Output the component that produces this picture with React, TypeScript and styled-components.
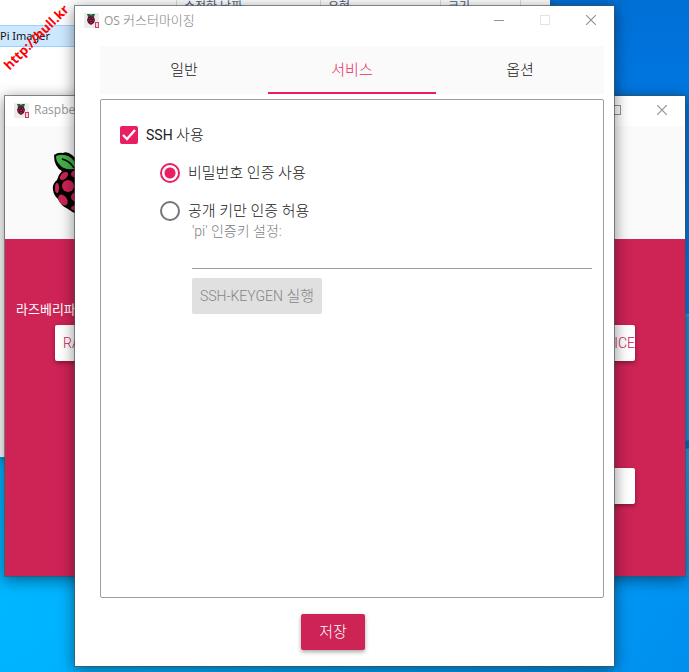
import React, { useState } from "react";
import styled, { createGlobalStyle } from "styled-components";

const GlobalStyle = createGlobalStyle`
  *, *::before, *::after { box-sizing: border-box; }
  body {
    margin: 0;
    font-family: Roboto, "Noto Sans CJK KR", sans-serif;
    font-size: 14px;
    line-height: 20px;
    color: #303030;
  }
  button, input { font: inherit; margin: 0; }
`;

const Desktop = styled.div`
  position: relative;
  min-height: 100vh;
  overflow: hidden;
  background:
    linear-gradient(
      to bottom,
      transparent 314px,
      #35a9e8 314px,
      #1f91e0 318px,
      #1f91e0 440px,
      #006fc8 441px,
      #006fc8 448px,
      #2b9be6 449px,
      #1f91e0 576px,
      transparent 576px
    ) right top / 8px 100% no-repeat,
    radial-gradient(circle at 0% 90%, #00b6ff 0%, #00aefc 20%, rgba(0, 150, 246, 0) 80%),
    linear-gradient(to bottom, #006fd6 0%, #007ae4 20%, #0090f2 85%, #008cec 100%);
`;

const Explorer = styled.section`
  position: absolute;
  inset: 0 139px 215px 0;
  background: #fff;
  box-shadow: 0 3px 10px rgba(0, 0, 0, 0.35);
`;

const ColumnHeader = styled.div`
  display: grid;
  grid-template-columns: 177px 144px 120px 80px 1fr;
  height: 14px;
  color: #4c607a;
  font-size: 12px;
  line-height: 14px;
`;

const ColumnName = styled.span`
  padding-left: 7px;
  border-right: 1px solid #dcdcdc;
  white-space: nowrap;
  &:last-child { border-right: 0; }
`;

const FileRow = styled.div`
  height: 22px;
  margin-top: 11px;
  background: #cce8ff;
  border: 1px solid #99d1ff;
  border-width: 1px 0;
  color: #111;
  font-family: "Noto Sans", sans-serif;
  font-size: 11px;
  line-height: 20px;
`;

const Watermark = styled.span`
  position: absolute;
  left: 36px;
  top: 37px;
  color: #f00;
  font: bold 13px/16px "Open Sans", sans-serif;
  transform: translate(-50%, -50%) rotate(-45deg);
  white-space: nowrap;
`;

const AppWindow = styled.section<{ $inset: string }>`
  position: absolute;
  inset: ${(p) => p.$inset};
  display: flex;
  flex-direction: column;
  background: #fff;
  border: 1px solid rgba(70, 80, 85, 0.62);
  background-clip: padding-box;
  box-shadow: 0 3px 14px rgba(0, 0, 0, 0.45);
`;

const TitleBar = styled.header`
  display: flex;
  align-items: center;
  height: 30px;
  padding: 0 0 2px 9px;
  flex: none;
`;

const Title = styled.h1`
  flex: 1;
  margin: 0 0 0 5px;
  color: #959595;
  font-family: "Open Sans", "Noto Sans CJK KR", sans-serif;
  font-size: 12px;
  font-weight: 400;
  line-height: 20px;
  white-space: nowrap;
`;

const TitleKo = styled.span`
  font-size: 13px;
  font-weight: 300;
  color: #808080;
`;

const Ko = styled.span`
  font-size: 15px;
  font-weight: 300;
`;

const CaptionButton = styled.button`
  display: grid;
  place-items: center;
  width: 46px;
  height: 28px;
  padding: 0;
  border: 0;
  background: transparent;
  color: #929292;
  &:disabled { color: #e4e4e4; }
`;

const SmallIcon = styled.svg`
  display: block;
  width: 15px;
  height: 15px;
  flex: none;
`;

const BrandHeader = styled.div`
  display: flex;
  align-items: center;
  height: 113px;
  padding-left: 47px;
  background: #fafafa;
`;

const BrandArea = styled.div`
  flex: 1;
  padding: 61px 50px 0 11px;
  background: #cd2355;
`;

const Choices = styled.div`
  display: flex;
  justify-content: space-between;
`;

const Choice = styled.div`
  display: flex;
  flex-direction: column;
  gap: 5px;
  color: #fff;
`;

const ChoiceLabel = styled.span`
  height: 20px;
  font-size: 13px;
`;

const WhiteButton = styled.button<{ $end?: boolean }>`
  width: 120px;
  height: 36px;
  margin-left: ${(p) => (p.$end ? "0" : "39px")};
  padding: 0 0 0 8px;
  text-align: ${(p) => (p.$end ? "right" : "left")};
  border: 0;
  border-radius: 2px;
  background: #fff;
  color: #cd2355;
  font-weight: 300;
  box-shadow: 0 2px 4px rgba(0, 0, 0, 0.35);
`;

const NextRow = styled.div`
  display: flex;
  justify-content: flex-end;
  margin-top: 107px;
`;

const DialogBody = styled.div`
  display: flex;
  flex: 1;
  flex-direction: column;
  padding: 10px 10px 16px 25px;
`;

const Tabs = styled.div`
  display: grid;
  grid-template-columns: repeat(3, 1fr);
  background: #fafafa;
`;

const Tab = styled.button<{ $active: boolean }>`
  height: 48px;
  padding: 2px 0 0;
  border: 0;
  border-bottom: 2px solid ${(p) => (p.$active ? "#e91e63" : "transparent")};
  background: transparent;
  color: ${(p) => (p.$active ? "#e91e63" : "#202020")};
`;

const Panel = styled.div`
  flex: 1;
  margin-top: 5px;
  padding: 25px 11px 24px 19px;
  border: 1px solid #9e9e9e;
  border-radius: 2px;
`;

const OptionRow = styled.label`
  display: flex;
  align-items: center;
  gap: 8px;
  height: 20px;
  color: #202020;
`;

const RadioGroup = styled.div`
  display: grid;
  gap: 18px;
  margin: 18px 0 0 40px;
`;

const TickSlot = styled.span`
  display: grid;
  color: #fff;
  & > * { grid-area: 1 / 1; }
  & > svg { pointer-events: none; }
  & > input:not(:checked) + svg { visibility: hidden; }
`;

const TickBox = styled.input`
  appearance: none;
  width: 18px;
  height: 18px;
  border: 2px solid #757575;
  border-radius: 2px;
  &:checked { border-color: #e91e63; background: #e91e63; }
`;

const Radio = styled.input`
  appearance: none;
  width: 20px;
  height: 20px;
  border: 2px solid #757575;
  border-radius: 50%;
  &:checked {
    border-color: #e91e63;
    background: radial-gradient(circle, #e91e63 5px, transparent 6px);
  }
`;

const KeyField = styled.div`
  display: flex;
  flex-direction: column;
  align-items: flex-start;
  margin: 2px 0 0 72px;
`;

const KeyLabel = styled.label`
  color: #808080;
  font-size: 14px;
  font-weight: 300;
  line-height: 16px;
`;

const KeyInput = styled.input`
  width: 100%;
  height: 30px;
  padding: 0;
  border: 0;
  border-bottom: 1px solid #9e9e9e;
  background: transparent;
  outline: 0;
`;

const KeygenButton = styled.button`
  height: 36px;
  margin-top: 9px;
  padding: 0 8px;
  border: 0;
  border-radius: 2px;
  background: #e0e0e0;
  color: #858585;
  font-weight: 300;
  white-space: nowrap;
`;

const Footer = styled.footer`
  display: flex;
  justify-content: center;
  padding: 16px 38px 0 0;
`;

const SaveButton = styled.button`
  width: 64px;
  height: 36px;
  padding: 0;
  border: 0;
  border-radius: 2px;
  background: #cd2355;
  color: #fff;
  box-shadow: 0 2px 4px rgba(0, 0, 0, 0.35);
`;

function RaspberryIcon() {
  return (
    <SmallIcon viewBox="0 0 15 15" aria-hidden="true">
      <rect width="15" height="15" rx="1" fill="#ececea" />
      <path d="M3 1h3l1 1 1-1h3l-1 3H4z" fill="#27633a" />
      <path d="M4 4l3-1 3 1 1 3-1 3-3 2-3-2-1-3z" fill="#5b1730" />
      <path d="M5 5h1v1H5zM8 5h1v1H8zM6 7h2v1H6zM4 7h1v1H4zM9 7h1v1H9zM6 9h2v1H6z" fill="#b51e4b" />
      <rect x="11.5" y="9.5" width="3" height="5" fill="#f7d5de" stroke="#d33b62" />
    </SmallIcon>
  );
}

function RaspberryLogo() {
  return (
    <svg width="50" height="62" viewBox="0 0 50 62" aria-hidden="true">
      <path
        d="M2 3Q6 0 11 1Q15-1 20 3Q23 5 25 9Q27 5 30 3Q35-1 39 1Q44 0 48 3Q48 15 40 19Q44 23 45 28Q50 32 49 38Q48 44 44 47Q41 54 34 57Q29 61 25 62Q21 61 16 57Q9 54 6 47Q2 44 1 38Q0 32 5 28Q6 23 10 19Q2 15 2 3Z"
        fill="#000"
      />
      <path d="M4 4Q15 0 22 9Q24 13 22 17Q11 18 8 13Q4 10 4 4Z" fill="#46af4b" />
      <path d="M46 4Q35 0 28 9Q26 13 28 17Q39 18 42 13Q46 10 46 4Z" fill="#46af4b" />
      <path d="M10 7Q18 9 22 16M40 7Q32 9 28 16" fill="none" stroke="#000" strokeWidth="1.5" />
      <g fill="#cd2355">
        <ellipse cx="12" cy="24" rx="3" ry="5" transform="rotate(48 12 24)" />
        <ellipse cx="38" cy="24" rx="3" ry="5" transform="rotate(-48 38 24)" />
        <ellipse cx="25" cy="22" rx="6" ry="4" />
        <ellipse cx="16" cy="34" rx="6" ry="6" />
        <ellipse cx="34" cy="34" rx="6" ry="6" />
        <ellipse cx="5" cy="36" rx="2" ry="5" />
        <ellipse cx="45" cy="36" rx="2" ry="5" />
        <ellipse cx="25" cy="45" rx="6" ry="5" />
        <ellipse cx="11" cy="48" rx="4" ry="6" transform="rotate(-35 11 48)" />
        <ellipse cx="39" cy="48" rx="4" ry="6" transform="rotate(35 39 48)" />
        <ellipse cx="25" cy="56" rx="6" ry="3" />
      </g>
    </svg>
  );
}

function CaptionButtons({ canMaximize }: { canMaximize: boolean }) {
  return (
    <>
      <CaptionButton aria-label="최소화">
        <svg width="10" height="10"><path d="M0 5.5h10" stroke="currentColor" /></svg>
      </CaptionButton>
      <CaptionButton aria-label="최대화" disabled={!canMaximize}>
        <svg width="10" height="10"><rect x=".5" y=".5" width="9" height="9" fill="none" stroke="currentColor" /></svg>
      </CaptionButton>
      <CaptionButton aria-label="닫기">
        <svg width="10" height="10"><path d="M0 0l10 10M10 0L0 10" stroke="currentColor" strokeWidth="1.2" /></svg>
      </CaptionButton>
    </>
  );
}

const tabNames = ["일반", "서비스", "옵션"];

export default function App() {
  const [tab, setTab] = useState(1);
  const [ssh, setSsh] = useState(true);
  const [auth, setAuth] = useState("password");

  return (
    <>
      <GlobalStyle />
      <Desktop>
        <Explorer>
          <ColumnHeader>
            <ColumnName />
            <ColumnName>수정한 날짜</ColumnName>
            <ColumnName>유형</ColumnName>
            <ColumnName>크기</ColumnName>
            <ColumnName />
          </ColumnHeader>
          <FileRow>Pi Imager</FileRow>
        </Explorer>

        <AppWindow $inset="95px 3px 95px 4px">
          <TitleBar>
            <RaspberryIcon />
            <Title>Raspberry Pi Imager</Title>
            <CaptionButtons canMaximize />
          </TitleBar>
          <BrandHeader><RaspberryLogo /></BrandHeader>
          <BrandArea>
            <Choices>
              <Choice>
                <ChoiceLabel>라즈베리파이</ChoiceLabel>
                <WhiteButton>RASPBERRY PI</WhiteButton>
              </Choice>
              <Choice>
                <ChoiceLabel />
                <WhiteButton $end>DEVICE</WhiteButton>
              </Choice>
            </Choices>
            <NextRow>
              <WhiteButton $end aria-label="다음" />
            </NextRow>
          </BrandArea>
        </AppWindow>

        <AppWindow $inset="5px 74px" role="dialog" aria-label="OS 커스터마이징">
          <TitleBar>
            <RaspberryIcon />
            <Title>OS <TitleKo>커스터마이징</TitleKo></Title>
            <CaptionButtons canMaximize={false} />
          </TitleBar>
          <DialogBody>
            <Tabs role="tablist">
              {tabNames.map((name, i) => (
                <Tab key={name} role="tab" aria-selected={tab === i} $active={tab === i} onClick={() => setTab(i)}>
                  <Ko>{name}</Ko>
                </Tab>
              ))}
            </Tabs>
            <Panel role="tabpanel">
              <OptionRow>
                <TickSlot>
                  <TickBox type="checkbox" checked={ssh} onChange={(e) => setSsh(e.target.checked)} />
                  <svg width="18" height="18" viewBox="0 0 18 18" aria-hidden="true">
                    <path d="M3 9l4 4 8-9" fill="none" stroke="currentColor" strokeWidth="2.4" />
                  </svg>
                </TickSlot>
                <span>SSH <Ko>사용</Ko></span>
              </OptionRow>
              <RadioGroup role="radiogroup">
                <OptionRow>
                  <Radio type="radio" name="auth" checked={auth === "password"} onChange={() => setAuth("password")} />
                  <Ko>비밀번호 인증 사용</Ko>
                </OptionRow>
                <OptionRow>
                  <Radio type="radio" name="auth" checked={auth === "key"} onChange={() => setAuth("key")} />
                  <Ko>공개 키만 인증 허용</Ko>
                </OptionRow>
              </RadioGroup>
              <KeyField>
                <KeyLabel htmlFor="keys">'pi' 인증키 설정:</KeyLabel>
                <KeyInput id="keys" disabled={auth !== "key"} />
                <KeygenButton disabled>SSH-KEYGEN <Ko>실행</Ko></KeygenButton>
              </KeyField>
            </Panel>
            <Footer>
              <SaveButton><Ko>저장</Ko></SaveButton>
            </Footer>
          </DialogBody>
        </AppWindow>

        <Watermark>http://hull.kr</Watermark>
      </Desktop>
    </>
  );
}
